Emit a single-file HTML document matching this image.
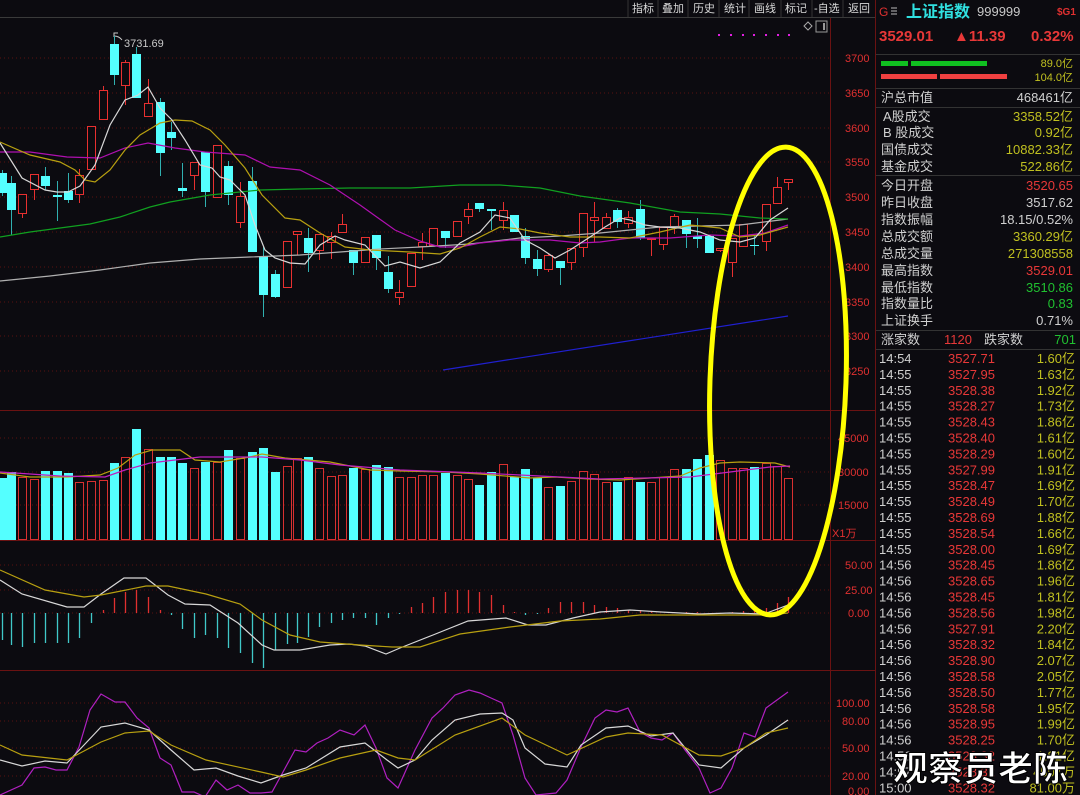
<!DOCTYPE html>
<html><head><meta charset="utf-8"><style>
*{margin:0;padding:0}
body{width:1080px;height:795px;background:#0c0b10;overflow:hidden;position:relative;font-family:"Liberation Sans","Noto Sans CJK SC",sans-serif}
svg{position:absolute;left:0;top:0}
</style></head><body>
<svg width="1080" height="795" xmlns="http://www.w3.org/2000/svg" font-family="Liberation Sans, Noto Sans CJK SC, sans-serif">
<rect width="1080" height="795" fill="#0c0b10"/>
<!-- toolbar -->
<g font-size="11" fill="#d8d8d8">
<line x1="0" y1="17.5" x2="875" y2="17.5" stroke="#3a3a3a"/>
<g stroke="#333" fill="none"><line x1="628" y1="0" x2="628" y2="17"/><line x1="658" y1="0" x2="658" y2="17"/><line x1="688" y1="0" x2="688" y2="17"/><line x1="719" y1="0" x2="719" y2="17"/><line x1="749" y1="0" x2="749" y2="17"/><line x1="781" y1="0" x2="781" y2="17"/><line x1="812" y1="0" x2="812" y2="17"/><line x1="843" y1="0" x2="843" y2="17"/></g>
<text x="632" y="12">指标</text><text x="662" y="12">叠加</text><text x="693" y="12">历史</text><text x="724" y="12">统计</text><text x="754" y="12">画线</text><text x="785" y="12">标记</text><text x="814" y="12">-自选</text><text x="848" y="12">返回</text>
</g>
<path d="M804 26 l4 -4 l4 4 l-4 4z" fill="none" stroke="#aaa"/>
<rect x="816" y="21" width="11" height="11" fill="none" stroke="#999"/><rect x="823" y="23" width="2" height="7" fill="#999"/>
<g fill="#e020e0"><rect x="718" y="34" width="2" height="2"/><rect x="730" y="34" width="2" height="2"/><rect x="742" y="34" width="2" height="2"/><rect x="753" y="34" width="2" height="2"/><rect x="765" y="34" width="2" height="2"/><rect x="777" y="34" width="2" height="2"/><rect x="788" y="34" width="2" height="2"/></g>
<!-- grid -->
<g stroke="#5a1010" stroke-dasharray="1,3">
<line x1="0" y1="58" x2="830" y2="58"/><line x1="0" y1="93" x2="830" y2="93"/><line x1="0" y1="128" x2="830" y2="128"/><line x1="0" y1="162" x2="830" y2="162"/><line x1="0" y1="197" x2="830" y2="197"/><line x1="0" y1="232" x2="830" y2="232"/><line x1="0" y1="267" x2="830" y2="267"/><line x1="0" y1="302" x2="830" y2="302"/><line x1="0" y1="336" x2="830" y2="336"/><line x1="0" y1="371" x2="830" y2="371"/>
<line x1="0" y1="438" x2="830" y2="438"/><line x1="0" y1="472" x2="830" y2="472"/><line x1="0" y1="505" x2="830" y2="505"/>
<line x1="0" y1="565" x2="830" y2="565"/><line x1="0" y1="590" x2="830" y2="590"/><line x1="0" y1="613" x2="830" y2="613"/>
<line x1="0" y1="703" x2="830" y2="703"/><line x1="0" y1="721" x2="830" y2="721"/><line x1="0" y1="748" x2="830" y2="748"/><line x1="0" y1="776" x2="830" y2="776"/>
</g>
<g stroke="#6a1212"><line x1="0" y1="410.5" x2="875" y2="410.5"/><line x1="0" y1="540.5" x2="875" y2="540.5"/><line x1="0" y1="670.5" x2="875" y2="670.5"/><line x1="830.5" y1="18" x2="830.5" y2="795"/><line x1="875.5" y1="0" x2="875.5" y2="795"/></g>
<g fill="#e03030" font-size="11">
<text x="845" y="62">3700</text><text x="845" y="97">3650</text><text x="845" y="132">3600</text><text x="845" y="166">3550</text><text x="845" y="201">3500</text><text x="845" y="236">3450</text><text x="845" y="271">3400</text><text x="845" y="306">3350</text><text x="845" y="340">3300</text><text x="845" y="375">3250</text>
<text x="838" y="442">45000</text><text x="838" y="476">30000</text><text x="838" y="509">15000</text><text x="832" y="537">X1万</text>
<text x="845" y="569">50.00</text><text x="845" y="594">25.00</text><text x="848" y="617">0.00</text>
<text x="836" y="707">100.00</text><text x="842" y="725">80.00</text><text x="842" y="752">50.00</text><text x="842" y="780">20.00</text><text x="848" y="795">0.00</text>
</g>
<text x="124" y="47" fill="#c8c8c8" font-size="11">3731.69</text>
<path d="M114 37 l0 -4 l4 0 M114 36 q5 0 8 4" stroke="#c8c8c8" fill="none"/>
<g id="candles"></g>
<!-- MAs -->
<g fill="none" stroke-width="1.2">
<polyline stroke="#b0b0b0" points="0,281 50,276 100,270 150,263 200,259 250,257 300,255 340,252 380,249 420,247 470,244 520,238 560,236 600,233 660,227 700,226 740,225 788,219"/>
<polyline stroke="#10a020" points="0,237 30,232 60,228 90,224 120,217 150,207 170,202 210,195 260,190 300,189 350,188 410,188 460,185 500,185 540,188 580,196 630,203 680,212 720,214 760,218 788,219"/>
<polyline stroke="#b010b0" points="0,152 30,152 67,157 100,158 125,148 148,143 175,148 205,152 245,155 270,167 300,170 330,185 360,205 395,230 420,241 440,247 460,247 480,243 510,240 550,240 580,243 600,242 630,238 670,238 710,235 740,236 765,233 788,225"/>
<polyline stroke="#b8a010" points="0,142 30,155 60,162 75,170 85,180 95,182 110,170 125,150 140,135 160,123 175,120 192,121 210,130 225,145 245,168 262,195 285,218 300,220 320,233 345,247 370,250 390,251 410,252 440,254 460,248 480,237 500,227 520,229 540,233 570,237 600,237 630,238 660,232 690,225 720,228 740,237 760,235 788,227"/>
<polyline stroke="#d8d8d8" points="0,143 22,178 45,190 57,192 68,192 80,186 95,165 110,125 125,100 138,95 148,87 160,108 172,120 185,140 200,165 212,168 220,177 230,180 245,195 255,225 265,250 275,258 290,263 305,264 320,245 335,236 345,240 365,245 385,266 400,262 420,268 440,262 460,243 480,232 495,215 510,218 525,240 540,248 555,258 570,250 590,237 605,227 620,218 630,220 645,225 660,227 680,228 700,232 720,240 740,242 755,238 770,220 788,208"/>
<line x1="443" y1="370" x2="788" y2="316" stroke="#2020d0"/>
<!-- volume MAs -->
<polyline stroke="#b8a010" points="0,473 30,477 67,477 100,475 118,468 135,455 152,450 180,450 195,460 220,462 250,457 262,454 285,458 330,462 370,470 400,471 445,472 480,474 530,478 555,477 590,479 620,480 680,476 700,468 720,463 740,462 775,463 790,467"/>
<polyline stroke="#c020c0" points="0,472 60,476 105,477 125,470 150,463 200,457 262,457 300,460 340,465 400,470 480,473 540,476 600,479 690,477 730,472 770,467 790,466"/>
<!-- MACD lines -->
<polyline stroke="#d8d8d8" points="0,580 22,594 67,607 84,607 101,594 124,578 146,578 168,595 185,604 210,605 238,623 262,645 274,650 300,650 330,645 349,644 365,646 386,654 400,648 433,635 468,621 506,618 528,625 546,625 573,618 600,612 630,610 661,612 700,614 730,613 764,614 788,605"/>
<polyline stroke="#b8a010" points="0,570 45,590 84,597 101,595 146,586 168,586 206,594 240,604 262,620 290,635 320,642 360,645 392,647 420,647 460,634 510,627 560,621 600,619 640,615 690,615 740,615 770,615 788,613"/>
<!-- KDJ -->
<polyline stroke="#b020c0" points="0,795 22,785 34,768 45,767 56,770 67,770 79,747 90,710 101,694 115,702 125,702 137,718 149,728 160,758 171,765 182,792 194,792 205,797 216,780 227,790 238,785 250,793 261,793 272,792 283,772 295,750 306,752 317,743 328,738 340,730 354,735 365,725 376,748 387,778 398,788 415,750 432,718 443,708 455,695 469,690 480,693 491,698 502,703 513,735 525,778 536,795 556,793 567,780 581,747 595,718 606,710 617,712 628,708 640,732 651,738 662,740 673,733 685,750 699,768 710,793 721,788 732,768 744,733 755,737 766,708 777,700 788,692"/>
<polyline stroke="#d8d8d8" points="0,760 22,766 45,761 67,763 101,727 125,723 149,730 171,750 194,770 216,768 238,776 261,783 283,775 306,768 340,747 365,743 387,760 398,768 415,760 432,740 455,720 480,714 502,713 513,720 525,748 545,764 567,767 581,745 606,728 628,726 651,736 673,733 699,765 721,768 744,748 766,735 788,720"/>
<polyline stroke="#b8a010" points="0,745 22,755 67,760 101,742 125,733 149,731 171,745 206,760 261,772 283,777 306,770 340,758 376,750 398,758 415,760 455,735 502,718 525,735 567,755 606,737 628,733 662,735 699,755 721,756 744,748 766,733 788,728"/>
</g>
<ellipse cx="778" cy="381" rx="68" ry="234" fill="none" stroke="#ffff00" stroke-width="5" transform="rotate(2 778 381)"/>
<!-- right panel -->
<g font-size="13">
<text x="879" y="16" fill="#e03030" font-size="12">G</text>
<path d="M891 8h6M891 11h6M891 14h6" stroke="#bbb"/>
<text x="906" y="17" fill="#30e0e0" font-size="16" font-weight="bold">上证指数</text>
<text x="977" y="16" fill="#c8c8c8">999999</text>
<text x="1057" y="15" fill="#e03030" font-size="10" font-weight="bold">$G1</text>
<g fill="#e83838" font-size="15" font-weight="bold"><text x="879" y="41">3529.01</text><text x="954" y="41">▲11.39</text><text x="1031" y="41">0.32%</text></g>
<line x1="876" y1="54.5" x2="1080" y2="54.5" stroke="#333"/>
<rect x="881" y="61" width="27" height="5" fill="#10c020"/><rect x="911" y="61" width="76" height="5" fill="#10c020"/>
<rect x="881" y="74" width="56" height="5" fill="#f04040"/><rect x="940" y="74" width="67" height="5" fill="#f04040"/>
<g fill="#c0c020" text-anchor="end" font-size="11"><text x="1073" y="67">89.0亿</text><text x="1073" y="81">104.0亿</text></g>
<line x1="876" y1="88.5" x2="1080" y2="88.5" stroke="#333"/>
<text x="881" y="102" fill="#d0d0d0">沪总市值</text><text x="1073" y="102" fill="#d0d0d0" text-anchor="end">468461亿</text>
<line x1="876" y1="107.5" x2="1080" y2="107.5" stroke="#333"/>
<g fill="#d0d0d0"><text x="883" y="121">A股成交</text><text x="883" y="137">B 股成交</text><text x="881" y="154">国债成交</text><text x="881" y="171">基金成交</text></g>
<g fill="#c0c020" text-anchor="end"><text x="1073" y="121">3358.52亿</text><text x="1073" y="137">0.92亿</text><text x="1073" y="154">10882.33亿</text><text x="1073" y="171">522.86亿</text></g>
<line x1="876" y1="175.5" x2="1080" y2="175.5" stroke="#333"/>
<g fill="#d0d0d0"><text x="881" y="190">今日开盘</text><text x="881" y="207">昨日收盘</text><text x="881" y="224">指数振幅</text><text x="881" y="241">总成交额</text><text x="881" y="258">总成交量</text><text x="881" y="275">最高指数</text><text x="881" y="292">最低指数</text><text x="881" y="308">指数量比</text><text x="881" y="325">上证换手</text></g>
<g text-anchor="end"><text x="1073" y="190" fill="#e83838">3520.65</text><text x="1073" y="207" fill="#d0d0d0">3517.62</text><text x="1073" y="224" fill="#d0d0d0">18.15/0.52%</text><text x="1073" y="241" fill="#c0c020">3360.29亿</text><text x="1073" y="258" fill="#c0c020">271308558</text><text x="1073" y="275" fill="#e83838">3529.01</text><text x="1073" y="292" fill="#20c030">3510.86</text><text x="1073" y="308" fill="#20c030">0.83</text><text x="1073" y="325" fill="#d0d0d0">0.71%</text></g>
<line x1="876" y1="330.5" x2="1080" y2="330.5" stroke="#333"/>
<text x="881" y="344" fill="#d0d0d0">涨家数</text><text x="972" y="344" fill="#e83838" text-anchor="end">1120</text><text x="984" y="344" fill="#d0d0d0">跌家数</text><text x="1076" y="344" fill="#20c030" text-anchor="end">701</text>
<line x1="876" y1="349.5" x2="1080" y2="349.5" stroke="#333"/>
<g id="ticks"></g>
</g>
<text x="893" y="781" fill="#fff" font-size="35" font-weight="bold" stroke="#000" stroke-width="1" font-family="Noto Sans CJK SC, sans-serif">观察员老陈</text>
</svg>
<script>
var NS="http://www.w3.org/2000/svg";
function el(p,t,a){var e=document.createElementNS(NS,t);for(var k in a)e.setAttribute(k,a[k]);p.appendChild(e);return e;}
var C=[[2,'c',173,193,170,196],[11,'c',183,210,176,235],[22,'r',194,214,194,218],[34,'r',174,190,174,200],[45,'c',176,186,167,190],[57,'c',195,197,181,221],[68,'c',191,200,173,203],[79,'r',175,195,169,203],[91,'r',126,170,126,170],[103,'r',90,120,86,120],[114,'c',44,75,36,85],[125,'r',62,86,60,105],[136,'c',54,98,47,98],[148,'r',103,117,79,117],[160,'c',102,153,98,176],[171,'c',132,138,122,150],[182,'c',188,191,163,197],[194,'r',162,176,162,190],[205,'c',152,192,152,207],[217,'r',145,198,145,198],[228,'c',166,195,161,205],[240,'r',196,223,182,228],[252,'c',181,252,167,252],[263,'c',256,295,247,317],[275,'c',274,297,270,298],[287,'r',241,288,241,288],[297,'r',231,235,231,255],[308,'c',238,253,228,272],[319,'r',234,251,234,260],[331,'r',236,243,232,259],[342,'r',224,233,214,232],[353,'c',250,263,250,275],[365,'r',237,263,237,263],[376,'c',235,258,235,270],[388,'c',272,289,256,293],[399,'r',292,298,280,305],[411,'r',253,287,253,287],[422,'r',242,247,233,260],[433,'r',228,246,228,246],[445,'c',231,238,231,248],[457,'r',221,237,221,237],[468,'r',209,217,203,224],[479,'c',203,209,203,212],[491,'c',209,211,209,230],[503,'r',210,221,202,230],[514,'c',215,232,215,232],[525,'c',236,258,228,264],[537,'c',259,269,250,276],[548,'r',255,270,254,272],[560,'c',261,268,261,285],[571,'r',248,263,248,270],[583,'r',213,248,213,257],[594,'r',217,221,202,242],[606,'r',217,229,213,229],[617,'c',210,222,208,228],[628,'r',217,224,211,228],[640,'c',209,238,200,240],[651,'r',238,240,238,256],[663,'r',227,245,227,250],[674,'r',216,227,214,234],[686,'c',220,234,220,248],[697,'c',236,239,218,248],[709,'c',236,253,236,253],[720,'r',248,251,248,252],[732,'r',238,263,238,277],[743,'r',224,247,224,247],[754,'c',245,246,235,255],[766,'r',204,242,204,251],[777,'r',187,204,177,204],[788,'r',179,183,179,190]];
var V=[478,472,477,479,471,471,473,482,481,480,463,457,429,449,457,457,463,468,462,462,450,458,452,448,472,466,458,457,468,476,475,468,469,465,467,477,477,475,475,473,475,479,485,472,464,477,469,478,487,486,481,471,474,482,482,477,482,482,477,469,469,459,455,460,468,468,467,463,466,478];
var M=[640,645,647,643,643,643,643,638,623,610,598,592,590,597,610,615,629,638,635,638,648,653,663,668,650,644,643,637,627,623,620,618,618,625,618,614,607,603,597,592,590,590,592,595,605,612,615,614,608,602,602,602,605,607,608,610,610,612,613,612,612,612,613,613,612,611,610,608,603,597];
var g=document.getElementById('candles');
C.forEach(function(c,i){var x=c[0],cy=c[1]=='c',col=cy?'#54ffff':'#e83030',wc=cy?'#30b0b0':'#e83030';
el(g,'line',{x1:x+.5,x2:x+.5,y1:c[4],y2:c[5],stroke:wc});
if(cy)el(g,'rect',{x:x-4,y:c[2],width:9,height:Math.max(1,c[3]-c[2]),fill:col});
else el(g,'rect',{x:x-3.5,y:c[2]+.5,width:8,height:Math.max(1,c[3]-c[2]-1),fill:'#0c0b10',stroke:col});
var v=V[i];
if(cy)el(g,'rect',{x:x-4,y:v,width:9,height:540-v,fill:col});
else el(g,'rect',{x:x-3.5,y:v+.5,width:8,height:539-v,fill:'none',stroke:'#d83030'});
var m=M[i];
el(g,'line',{x1:x+.5,x2:x+.5,y1:613,y2:m,stroke:m>613?'#40c8c8':'#e03030','stroke-width':1.3});
});
var T=[["14:54","3527.71","1.60亿"],["14:55","3527.95","1.63亿"],["14:55","3528.38","1.92亿"],["14:55","3528.27","1.73亿"],["14:55","3528.43","1.86亿"],["14:55","3528.40","1.61亿"],["14:55","3528.29","1.60亿"],["14:55","3527.99","1.91亿"],["14:55","3528.47","1.69亿"],["14:55","3528.49","1.70亿"],["14:55","3528.69","1.88亿"],["14:55","3528.54","1.66亿"],["14:55","3528.00","1.69亿"],["14:56","3528.45","1.86亿"],["14:56","3528.65","1.96亿"],["14:56","3528.45","1.81亿"],["14:56","3528.56","1.98亿"],["14:56","3527.91","2.20亿"],["14:56","3528.32","1.84亿"],["14:56","3528.90","2.07亿"],["14:56","3528.58","2.05亿"],["14:56","3528.50","1.77亿"],["14:56","3528.58","1.95亿"],["14:56","3528.95","1.99亿"],["14:56","3528.25","1.70亿"],["14:56","3528.32","1.81亿"],["14:57","3528.32","4507万"],["15:00","3528.32","81.00万"]];
var tg=document.getElementById('ticks');
T.forEach(function(r,i){var y=363+i*15.9;
el(tg,'text',{x:879,y:y,fill:'#d0d0d0'}).textContent=r[0];
el(tg,'text',{x:948,y:y,fill:'#e83838'}).textContent=r[1];
el(tg,'text',{x:1075,y:y,fill:'#c0c020','text-anchor':'end'}).textContent=r[2];});
</script>
</body></html>
